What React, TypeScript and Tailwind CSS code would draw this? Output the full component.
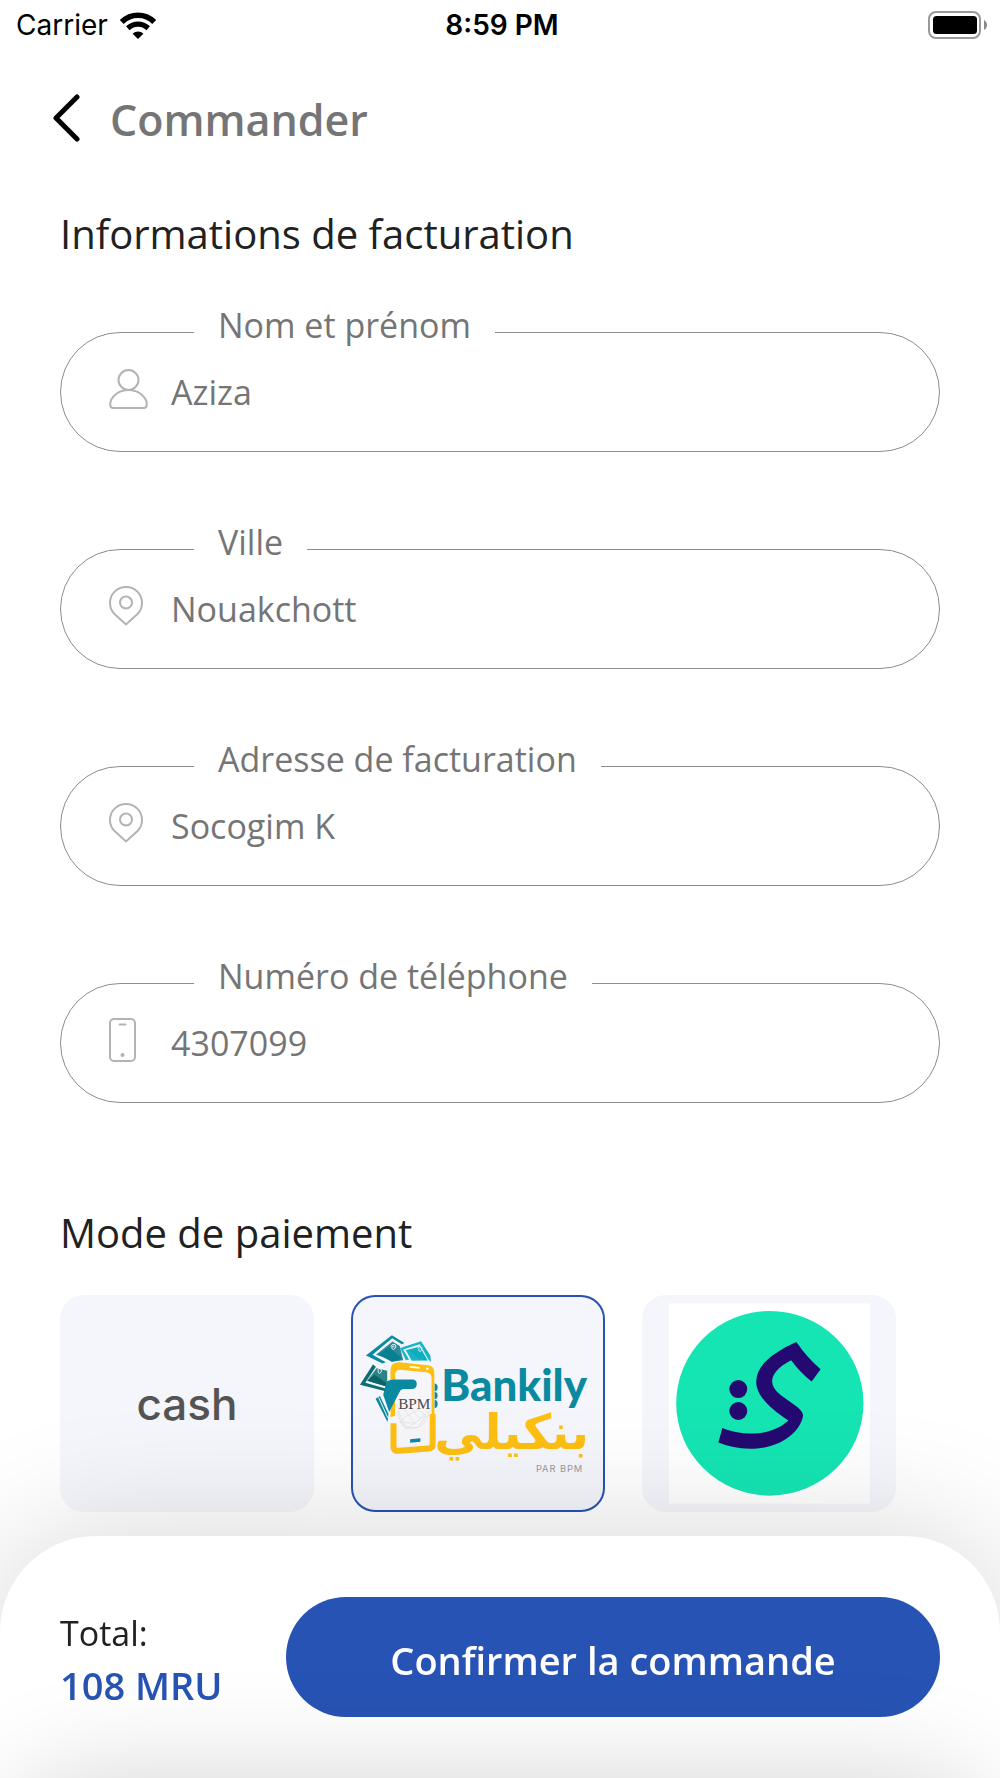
import { useState, type ReactNode } from 'react';

type Field = {
  id: string;
  label: string;
  icon: ReactNode;
};

const UserIcon = () => (
  <svg width="39" height="40" viewBox="0 0 39 40" fill="none" stroke="#b3b3b3" strokeWidth="2">
    <circle cx="19.5" cy="11" r="10" />
    <path d="M19.5 21C9.5 21 1.2 28 1.2 35.5C1.2 38 2.5 39 4.5 39H34.5C36.5 39 37.8 38 37.8 35.5C37.8 28 29.5 21 19.5 21Z" />
  </svg>
);

const PinIcon = () => (
  <svg width="34" height="40" viewBox="0 0 34 40" fill="none" stroke="#b3b3b3" strokeWidth="2">
    <path d="M17 1C8 1 1 8 1 17C1 21.500 2.500 25 5.500 28L17 38.500L28.500 28C31.500 25 33 21.500 33 17C33 8 26 1 17 1Z" />
    <circle cx="17" cy="16.500" r="6" />
  </svg>
);

const PhoneIcon = () => (
  <svg width="27" height="44" viewBox="0 0 27 44" fill="none" stroke="#b3b3b3" strokeWidth="2">
    <rect x="1" y="1" width="25" height="42" rx="4" />
    <path d="M10.500 6.500H16.500" strokeLinecap="round" />
    <circle cx="13.500" cy="37" r="2" fill="#b3b3b3" stroke="none" />
  </svg>
);

const WifiIcon = () => (
  <svg width="36" height="27" viewBox="0 0 36 27" fill="none" stroke="#000">
    <path d="M1.800 10C11 1 25 1 34.200 10" strokeWidth="5.600" />
    <path d="M7.800 16.200C13.800 10.800 22.200 10.800 28.200 16.200" strokeWidth="5.200" />
    <path d="M12.600 21.800C15.800 18.600 20.200 18.600 23.400 21.800L18 27Z" fill="#000" stroke="none" />
  </svg>
);

const BatteryIcon = () => (
  <svg width="60" height="28" viewBox="0 0 60 28">
    <rect x="1" y="1" width="51" height="26" rx="7" fill="none" stroke="#999" strokeWidth="2" />
    <rect x="5" y="5" width="44" height="18" rx="3.500" />
    <path d="M56 9C60 11 60 17 56 19Z" fill="#888" />
  </svg>
);

const BankilyLogo = () => (
  <svg viewBox="33 45 765 651" className="h-full w-full">
    {/* bank notes */}
    <path d="M78 226L156 165L194 188L186 192L157 174L98 224L138 246L128 250Z" fill="#0a8aa0" />
    <path d="M108 224L158 184L180 197L190 240L156 245L145 236Z" fill="#2c8b9b" />
    <path d="M116 224L146 200L188 236L156 245Z" fill="#077f92" />
    <path d="M181 203L244 183L272 226L274 246L266 238L240 192L190 208L208 238L198 240Z" fill="#18b5c7" />
    <path d="M198 210L240 199L264 241L216 242Z" fill="#18b5c7" />
    <path d="M206 210L242 206L264 241L240 238Z" fill="#0aa5ba" opacity=".55" />
    <path d="M99 253L60 314L140 334L140 326L76 308L108 260Z" fill="#0b6e70" />
    <path d="M110 264L82 302L142 320L142 272Z" fill="#2c8386" />
    <path d="M104 284L82 302L142 320L142 310Z" fill="#0b6467" />
    <g fill="none" stroke="#e2f1f4" strokeWidth="3">
      <path d="M153 198q6-10 14-4q4 10-6 14q-8-2-4-10q6-2 6 4" />
      <path d="M234 204q6-8 12-2q3 9-5 12q-7-2-3-9" />
      <path d="M112 270q6-8 12-2q3 9-5 12q-7-2-3-9" />
    </g>
    {/* phone body */}
    <path d="M152 412V268Q153 246 178 246L266 255Q284 257 284 278V402H275V292Q274 279 262 277L180 269Q168 269 168 282V410Z" fill="#fdbf12" />
    <path d="M166 284Q166 270 180 270L262 278Q275 281 275 292V492L174 501V420L166 412Z" fill="#f6f6f8" />
    <path d="M210 260L240 263" stroke="#fff" strokeWidth="5" />
    <circle cx="263" cy="266" r="4" fill="#fff" />
    <path
      d="M161 430V503Q161 514 176 513L268 506Q279 505 279 494V402"
      fill="none"
      stroke="#fdbf12"
      strokeWidth="18"
    />
    <path d="M150 412L172 406V420L150 430Z" fill="#f4f6fb" />
    <path d="M211 478L242 475V486L211 489Z" fill="#0a8aa0" />
    <g fill="none" stroke="#dedee2" strokeWidth="2">
      <path d="M176 392L198 446L236 442L260 408L236 388L206 404L180 426L226 430L264 394M188 386L206 404L226 430L198 446M216 388L240 416L260 408M180 426L198 446" />
      <path d="M176 392C176 432 196 446 226 444C250 440 266 420 268 392" />
    </g>
    {/* hand */}
    <path d="M140 304Q150 298 164 298H218Q231 298 231 312Q231 326 218 327H190Q182 328 178 338L148 396L130 344Z" fill="#0a8aa0" />
    <path d="M120 348L146 402L143 426L107 356Z" fill="#0a8aa0" />
    <path d="M116 352L144 414" stroke="#f4f6fb" strokeWidth="3" />
    <path d="M285 310Q294 311 294 322Q294 332 285 334ZM285 336Q294 337 294 347Q294 356 285 358ZM285 360Q294 361 294 371Q294 382 285 385Z" fill="#0a8aa0" />
    <text x="175" y="386" fontFamily="Liberation Serif, serif" fontSize="46" fill="#4b4b4d">BPM</text>
    <text x="305" y="362" fontFamily="Lato, sans-serif" fontWeight="900" fontSize="132" fill="#0a8aa0">Bankily</text>
    <text
      x="750"
      y="508"
      direction="rtl"
      fontFamily="DejaVu Sans, sans-serif"
      fontWeight="700"
      fontSize="146"
      fill="#fdbf12"
    >
      بنكيلي
    </text>
    <text x="590" y="577" fontFamily="Inter, sans-serif" fontSize="28" fill="#98989c" className="tracking-widest">PAR BPM</text>
  </svg>
);

const SedadLogo = () => (
  <svg viewBox="33 45 765 651" className="h-full w-full">
    <rect x="114" y="69" width="605" height="603" fill="#fff" />
    <ellipse cx="418" cy="370" rx="282" ry="278" fill="#15e5b3" />
    <path
      d="M498 185Q530 232 571 267L544 304Q512 280 482 240C440 262 424 285 425 306C428 350 518 376 518 406C515 445 462 507 358 507Q306 506 263 488L275 444Q310 460 364 461C414 461 450 444 474 422C420 386 377 348 377 304C378 258 420 220 498 185Z"
      fill="#240a70"
    />
    <circle cx="323" cy="327" r="27" fill="#240a70" />
    <circle cx="323" cy="393" r="27" fill="#240a70" />
  </svg>
);

const fields: Field[] = [
  { id: 'name', label: 'Nom et prénom', icon: <UserIcon /> },
  { id: 'city', label: 'Ville', icon: <PinIcon /> },
  { id: 'address', label: 'Adresse de facturation', icon: <PinIcon /> },
  { id: 'phone', label: 'Numéro de téléphone', icon: <PhoneIcon /> },
];

const methods = [
  { id: 'cash', name: 'cash', content: <span className="font-[Inter,sans-serif] text-[44px] font-medium text-[#545454]">cash</span> },
  { id: 'bankily', name: 'Bankily', content: <BankilyLogo /> },
  { id: 'sedad', name: 'Sedad', content: <SedadLogo /> },
];

export default function App() {
  const [method, setMethod] = useState('bankily');
  const [values, setValues] = useState<Record<string, string>>({
    name: 'Aziza',
    city: 'Nouakchott',
    address: 'Socogim K',
    phone: '4307099',
  });

  return (
    <div className="relative flex min-h-screen flex-col overflow-hidden bg-white font-[Open_Sans,sans-serif] text-[#212121]">
      <div className="grid h-[50px] grid-cols-3 items-center pr-3 pl-4 font-[Inter,sans-serif] text-[28px] text-black">
        <div className="flex items-center gap-3">
          Carrier
          <WifiIcon />
        </div>
        <span className="text-center font-semibold">8:59 PM</span>
        <div className="flex justify-end">
          <BatteryIcon />
        </div>
      </div>

      <header className="flex h-[140px] items-center gap-[30px] px-[52px]">
        <button type="button" aria-label="Retour" className="pb-1">
          <svg width="28" height="48" viewBox="0 0 28 48" fill="none" stroke="#000" strokeWidth="5" strokeLinecap="round" strokeLinejoin="round">
            <path d="M25 3L4 24L25 45" />
          </svg>
        </button>
        <h1 className="text-[43px] font-semibold text-[#757575]">Commander</h1>
      </header>

      <main className="flex flex-1 flex-col px-[60px] pt-5">
        <h2 className="text-[40px] leading-[48px]">Informations de facturation</h2>
        <div className="mt-[74px] flex flex-col gap-[97px]">
          {fields.map((f) => (
            <div key={f.id} className="relative flex h-[120px] items-center rounded-full border border-[#8c8c8c] pr-12 pl-12">
              <label
                htmlFor={f.id}
                className="absolute -top-7 left-[133px] bg-white px-6 text-[34px] leading-10 text-[#757575]"
              >
                {f.label}
              </label>
              <span className="w-[62px] shrink-0 pb-1.5">{f.icon}</span>
              <input
                id={f.id}
                value={values[f.id]}
                onChange={(e) => setValues({ ...values, [f.id]: e.target.value })}
                className="min-w-0 flex-1 bg-transparent text-[34px] text-[#757575] outline-none"
              />
            </div>
          ))}
        </div>

        <h2 className="mt-[106px] text-[40px] leading-[48px]">Mode de paiement</h2>
        <div className="mt-[38px] mb-6 flex gap-[37px]">
          {methods.map((m) => (
            <label
              key={m.id}
              className={`relative flex h-[217px] w-[254px] shrink-0 items-center justify-center overflow-hidden rounded-3xl bg-[#f4f6fb] ${
                method === m.id ? 'ring-2 ring-[#2753b5] ring-inset' : ''
              }`}
            >
              <input
                type="radio"
                name="method"
                aria-label={m.name}
                checked={method === m.id}
                onChange={() => setMethod(m.id)}
                className="sr-only"
              />
              {m.content}
            </label>
          ))}
        </div>
      </main>

      <footer className="sticky bottom-0 flex h-[242px] items-center gap-16 rounded-t-[96px] bg-white px-[60px] shadow-[0_0_130px_rgba(0,0,0,0.17)]">
        <div className="w-[162px] shrink-0 whitespace-nowrap pt-1 leading-[52px]">
          <p className="text-[34px]">Total:</p>
          <p className="text-[38px] font-semibold text-[#2753b5]">108 MRU</p>
        </div>
        <button type="button" className="h-[120px] flex-1 rounded-full bg-[#2753b5] pt-1.5 text-[38px] font-semibold text-white">
          Confirmer la commande
        </button>
      </footer>
      <div className="pointer-events-none absolute inset-x-0 top-full h-[242px] rounded-t-[96px] shadow-[0_0_110px_rgba(0,0,0,0.17)]" />
    </div>
  );
}
